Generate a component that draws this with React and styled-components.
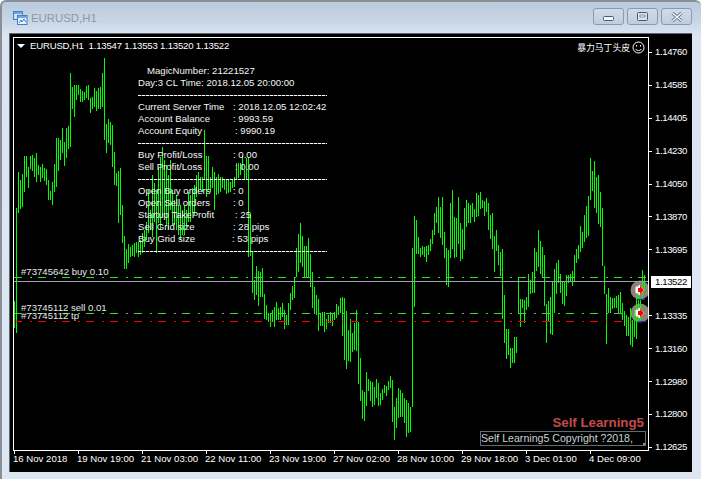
import React from 'react';
import styled, { createGlobalStyle } from 'styled-components';

const GlobalStyle = createGlobalStyle`
  html, body { margin: 0; padding: 0; background: #f4f6f8; }
  body { font-family: "Liberation Sans", Arial, sans-serif; }
`;

const Window = styled.div`
  width: 701px;
  height: 479px;
  box-sizing: border-box;
  display: flex;
  flex-direction: column;
  border-top: 2px solid #8a8f96;
  border-left: 2px solid #8a8f96;
  border-top-left-radius: 6px;
  border-top-right-radius: 6px;
  background: linear-gradient(#b9cbdd 0, #c9d7e5 20px, #dbe6f2 34px, #dce7f3 100%);
  overflow: hidden;
`;

const TitleBar = styled.div`
  height: 31px;
  flex: none;
  display: flex;
  align-items: center;
  padding: 0 9px 0 10px;
  gap: 3px;
`;

const TitleText = styled.span`
  font-size: 11.4px;
  color: #8b98a6;
  flex: 1;
`;

const Buttons = styled.div`
  display: flex;
  gap: 3px;
  margin-top: -2px;
`;

const WinButton = styled.div`
  width: 31px;
  height: 17px;
  box-sizing: border-box;
  border: 1px solid #8a9bb0;
  border-radius: 3px;
  background: linear-gradient(#cfdbe8, #bfcedf);
  display: flex;
  align-items: center;
  justify-content: center;
`;

const MinimizeGlyph = styled.svg`
  margin-top: 4px;
`;

const ChartFrame = styled.div`
  width: 683px;
  height: 439px;
  flex: none;
  margin-left: 7px;
  box-sizing: border-box;
  border-top: 1px solid #5d6670;
  border-left: 1px solid #5d6670;
  background: #000;
  padding: 3px 0 0 3px;
  display: grid;
  grid-template-columns: 636px 1fr;
  grid-template-rows: 414px 1fr;
  color: #fff;
  font-size: 9.6px;
  line-height: 12px;
`;

const Plot = styled.div`
  position: relative;
  border: 1px solid #fff;
  overflow: hidden;
  box-sizing: border-box;
`;

const ChartSvg = styled.svg`
  display: block;
  shape-rendering: crispEdges;
`;

const Header = styled.div`
  position: absolute;
  left: 3px;
  top: 2px;
  display: flex;
  align-items: center;
  gap: 5px;
  white-space: pre;
  letter-spacing: -0.2px;
`;

const Triangle = styled.span`
  width: 0;
  height: 0;
  border-left: 4px solid transparent;
  border-right: 4px solid transparent;
  border-top: 4px solid #fff;
`;

const Dashboard = styled.div`
  position: absolute;
  left: 124px;
  top: 27px;
  width: 190px;
  display: flex;
  flex-direction: column;
  color: #f2f6f6;
`;

const Row = styled.div`
  height: 12px;
  display: flex;
  white-space: pre;
  padding-left: ${p => p.$indent || 0}px;
`;

const RowLabel = styled.span`
  width: ${p => p.$w}px;
  flex: none;
`;

const Rule = styled.div`
  height: 12px;
  display: flex;
  align-items: center;
  &::before {
    content: "";
    width: 189px;
    height: 1px;
    background: repeating-linear-gradient(90deg, #fff 0 3px, #555 3px 4px);
  }
`;

const TradeLabel = styled.div`
  position: absolute;
  left: 7px;
  top: ${p => p.$top}px;
  color: #e4e8e8;
  white-space: pre;
`;

const Badge = styled.div`
  position: absolute;
  right: 3px;
  top: 3px;
  display: flex;
  align-items: center;
  gap: 2px;
  font-family: "Noto Sans CJK SC", sans-serif;
  font-size: 8.8px;
`;

const Brand = styled.div`
  position: absolute;
  right: 4px;
  bottom: 21px;
  font-size: 13.3px;
  font-weight: 700;
  color: #c24c4c;
`;

const CopyBox = styled.div`
  position: absolute;
  right: 2px;
  bottom: 4px;
  width: 166px;
  height: 15px;
  box-sizing: border-box;
  border: 1px solid #5f6e75;
  color: #c9d2d2;
  font-size: 10.6px;
  line-height: 13px;
  white-space: pre;
  &::after {
    content: "";
    position: absolute;
    right: 0;
    bottom: 0;
    width: 2px;
    height: 2px;
    background: #e0708a;
  }
`;

const PriceAxis = styled.div`
  display: flex;
  flex-direction: column;
  margin-top: -1px;
`;

const PriceRow = styled.div`
  height: 32.92px;
  flex: none;
  display: flex;
  align-items: center;
  gap: 3px;
`;

const PriceTick = styled.span`
  width: 3px;
  height: 1px;
  background: ${p => (p.$hidden ? 'transparent' : '#fff')};
`;

const PriceText = styled.span`
  letter-spacing: -0.4px;
  ${p => p.$current && 'background:#fff;color:#000;margin-left:-4px;padding:0 4px;margin-top:-2px;'}
`;

const TimeAxis = styled.div`
  display: flex;
  grid-column: 1 / span 2;
`;

const TimeCell = styled.div`
  width: 64px;
  flex: none;
  white-space: nowrap;
  &::before {
    content: "";
    display: block;
    width: 1px;
    height: 3px;
    background: #fff;
    margin: 0 0 -1px 1px;
  }
`;

// top/bottom pixel of every bar, left to right, one bar per 2px from x=14
const BARS = [
  [301,328],[208,333],[172,213],[180,209],[174,207],[156,192],[156,177],[167,188],[156,169],[155,171],
  [158,177],[153,182],[165,175],[167,182],[164,178],[168,181],[169,185],[180,200],[191,200],[182,205],
  [164,192],[138,187],[138,171],[140,160],[128,153],[142,166],[128,158],[126,149],[73,147],[87,109],
  [85,117],[85,100],[85,95],[89,102],[91,102],[92,100],[86,98],[85,100],[98,113],[97,109],
  [88,107],[91,111],[88,109],[87,109],[73,107],[58,140],[124,153],[119,143],[122,145],[125,167],
  [152,185],[173,186],[171,223],[168,215],[205,243],[236,269],[249,269],[244,263],[247,257],[245,256],
  [243,257],[242,253],[242,257],[240,255],[233,253],[230,247],[222,240],[190,233],[210,230],[175,237],
  [183,222],[190,253],[168,223],[157,230],[147,217],[160,217],[165,225],[175,230],[160,210],
  [190,225],[200,225],[195,230],[205,235],[205,240],[210,235],[205,235],[210,227],[192,222],[195,222],
  [188,213],[185,215],[175,197],[172,192],[177,190],[177,192],[130,180],[156,197],[156,190],[177,192],
  [167,188],[172,210],[177,195],[174,194],[177,192],[177,188],[179,190],[179,194],[179,193],[182,192],
  [179,188],[177,187],[163,180],[163,178],[163,175],[155,170],[170,180],[158,180],[157,257],[213,256],
  [252,293],[280,300],[266,295],[271,306],[272,297],[268,297],[294,319],[305,320],[313,322],[313,327],
  [310,322],[307,327],[302,320],[308,320],[307,320],[303,317],[310,329],[315,325],[303,325],[293,310],
  [286,300],[277,298],[248,277],[234,272],[223,263],[236,267],[246,277],[246,277],[238,277],[254,287],
  [272,308],[287,314],[295,315],[299,331],[313,326],[312,326],[312,332],[319,329],[315,323],[312,323],
  [314,326],[312,320],[304,318],[306,315],[298,313],[297,336],[298,360],[311,369],[330,361],[319,362],
  [333,352],[323,350],[310,351],[322,384],[358,401],[390,419],[392,421],[372,406],[379,391],[381,401],
  [382,407],[387,405],[379,398],[383,406],[393,405],[389,400],[385,393],[386,396],[381,390],[376,388],
  [380,422],[407,440],[398,428],[388,418],[390,417],[393,417],[398,423],[400,437],[403,433],[407,432],
  [248,407],[216,307],[220,254],[237,254],[248,257],[246,255],[247,257],[246,262],[245,255],[239,251],
  [230,244],[213,235],[207,223],[197,233],[207,238],[197,245],[232,258],[248,285],[250,287],[203,258],
  [190,249],[217,258],[218,257],[197,244],[223,261],[229,259],[208,250],[200,227],[203,223],[205,223],
  [203,217],[209,222],[193,217],[195,216],[192,209],[200,208],[201,216],[198,212],[203,230],[215,239],
  [213,249],[236,272],[230,251],[245,265],[252,276],[249,319],[295,343],[329,359],[329,355],[348,368],
  [348,363],[337,363],[337,353],[277,313],[299,327],[299,308],[300,323],[297,310],[274,307],[280,294],
  [272,293],[248,293],[252,271],[230,267],[241,274],[247,277],[255,306],[304,343],[301,322],[297,334],
  [281,335],[269,313],[263,294],[260,283],[274,293],[281,304],[281,306],[275,296],[275,283],[274,281],
  [271,286],[255,281],[249,263],[245,259],[226,252],[232,248],[215,242],[206,238],[196,236],[158,200],
  [171,191],[161,208],[177,213],[175,224],[192,227],[208,266],[266,294],[294,344],[288,313],[297,313],
  [298,309],[298,308],[296,308],[295,313],[292,313],[303,320],[311,326],[315,336],[317,336],[308,345],
  [320,347],[309,337],[295,339],[295,322],[300,320],[270,297],[275,290],
];

const barPath = BARS.map(([top, bottom], i) => `M${14 + i * 2 + 0.5} ${top}V${bottom}`).join('');

const DASHBOARD = [
  { rule: true },
  { label: 'Current Server Time', w: 95, value: ': 2018.12.05 12:02:42' },
  { label: 'Account Balance', w: 95, value: ': 9993.59' },
  { label: 'Account Equity', w: 97, value: ': 9990.19' },
  { rule: true },
  { label: 'Buy Profit/Loss', w: 95, value: ': 0.00' },
  { label: 'Sell Profit/Loss', w: 97, value: ': 0.00' },
  { rule: true },
  { label: 'Open Buy orders', w: 95, value: ': 0' },
  { label: 'Open Sell orders', w: 95, value: ': 0' },
  { label: 'Startup TakeProfit', w: 97, value: ': 25' },
  { label: 'Sell Grid size', w: 95, value: ': 28 pips' },
  { label: 'Buy Grid size', w: 94, value: ': 53 pips' },
  { rule: true },
];

const PRICES = ['1.14760','1.14585','1.14405','1.14230','1.14050','1.13870','1.13695','1.13522','1.13335','1.13160','1.12980','1.12800','1.12625'];
const TIMES = ['16 Nov 2018','19 Nov 19:00','21 Nov 03:00','22 Nov 11:00','23 Nov 19:00','27 Nov 02:00','28 Nov 10:00','29 Nov 18:00','3 Dec 01:00','4 Dec 09:00'];

const WindowIcon = () => (
  <svg width="16" height="16" viewBox="0 0 16 16">
    <rect x="1.5" y="1.5" width="9" height="8" fill="#cfe3f7" stroke="#3f7fc4" />
    <rect x="5.5" y="5.5" width="9.5" height="9" fill="#eaf3fc" stroke="#3f7fc4" />
    <rect x="2" y="2" width="8" height="2" fill="#6fa5dc" />
    <rect x="6" y="6" width="9" height="2" fill="#6fa5dc" />
    <path d="M7 13l2-3 1 2 2-3 2 3" fill="none" stroke="#3f7fc4" />
  </svg>
);

const Smiley = () => (
  <svg width="13" height="13" viewBox="0 0 13 13" fill="none" stroke="#fff">
    <circle cx="6.5" cy="6.5" r="5.5" />
    <path d="M4.5 4v1.5M8.5 4v1.5" />
    <path d="M3.5 8c1.5 2 4.5 2 6 0" />
  </svg>
);

const Arrow = ({ y }) => (
  <g shapeRendering="auto">
    <path d={`M636 ${y - 3}h3v-2l5 5-5 5v-2h-3z`} fill="#fff" stroke="#fff" strokeWidth="1" />
    <path d={`M638 ${y - 2}h2v-2.2l4 4.2-4 4.2v-2.2h-2z`} fill="#f00" />
  </g>
);

const DASH = '8 8 2 6';

export default function App() {
  return (
    <Window>
      <GlobalStyle />
      <TitleBar>
        <WindowIcon />
        <TitleText>EURUSD,H1</TitleText>
        <Buttons>
          <WinButton>
            <MinimizeGlyph width="11" height="6"><rect x="0.5" y="0.5" width="10" height="4" rx="1" fill="#f4f7fa" stroke="#4c5966" /></MinimizeGlyph>
          </WinButton>
          <WinButton>
            <svg width="11" height="9"><rect x="0.5" y="0.5" width="10" height="8" rx="1" fill="#dbe4ee" stroke="#4c5966" /><rect x="3" y="3" width="5" height="2" fill="#f4f7fa" stroke="#4c5966" strokeWidth="0.6" /></svg>
          </WinButton>
          <WinButton>
            <svg width="12" height="10" viewBox="0 0 12 10"><path d="M1.5 1L10.5 9M10.5 1L1.5 9" stroke="#56616d" strokeWidth="3" /><path d="M1.5 1L10.5 9M10.5 1L1.5 9" stroke="#f4f7fa" strokeWidth="1.6" /></svg>
          </WinButton>
        </Buttons>
      </TitleBar>
      <ChartFrame>
        <Plot>
          <ChartSvg width="634" height="412" viewBox="14 38 634 412">
            <circle cx="640" cy="290" r="9.5" fill="#8a8279" shapeRendering="auto" />
            <circle cx="640" cy="313" r="9.5" fill="#8a8279" shapeRendering="auto" />
            <path d={barPath} stroke="#00ff00" strokeWidth="1" fill="none" />
            <path d="M14 277.5H648M14 313.5H648" stroke="#33dd22" strokeDasharray={DASH} />
            <path d="M14 321.5H648" stroke="#f00" strokeDasharray={DASH} />
            <path d="M14 281.5H648" stroke="#9aa5b0" />
            <path d="M638 299.5h7M638 321.5h7" stroke="#2030c0" />
            <Arrow y={290} />
            <Arrow y={313} />
          </ChartSvg>
          <Header>
            <Triangle />
            <span>{'EURUSD,H1  1.13547 1.13553 1.13520 1.13522'}</span>
          </Header>
          <Badge>暴力马丁头皮<Smiley /></Badge>
          <Dashboard>
            <Row $indent={9}>MagicNumber: 21221527</Row>
            <Row>Day:3 CL Time: 2018.12.05 20:00:00</Row>
            {DASHBOARD.map((item, i) => (item.rule
              ? <Rule key={i} />
              : <Row key={i}><RowLabel $w={item.w}>{item.label}</RowLabel>{item.value}</Row>
            ))}
          </Dashboard>
          <TradeLabel $top={228}>#73745642 buy 0.10</TradeLabel>
          <TradeLabel $top={264}>#73745112 sell 0.01</TradeLabel>
          <TradeLabel $top={272}>#73745112 tp</TradeLabel>
          <Brand>Self Learning5</Brand>
          <CopyBox>Self Learning5 Copyright ?2018,</CopyBox>
        </Plot>
        <PriceAxis>
          {PRICES.map((p, i) => (
            <PriceRow key={p}>
              <PriceTick $hidden={i === 7} />
              <PriceText $current={i === 7}>{p}</PriceText>
            </PriceRow>
          ))}
        </PriceAxis>
        <TimeAxis>
          {TIMES.map(t => <TimeCell key={t}>{t}</TimeCell>)}
        </TimeAxis>
      </ChartFrame>
    </Window>
  );
}
